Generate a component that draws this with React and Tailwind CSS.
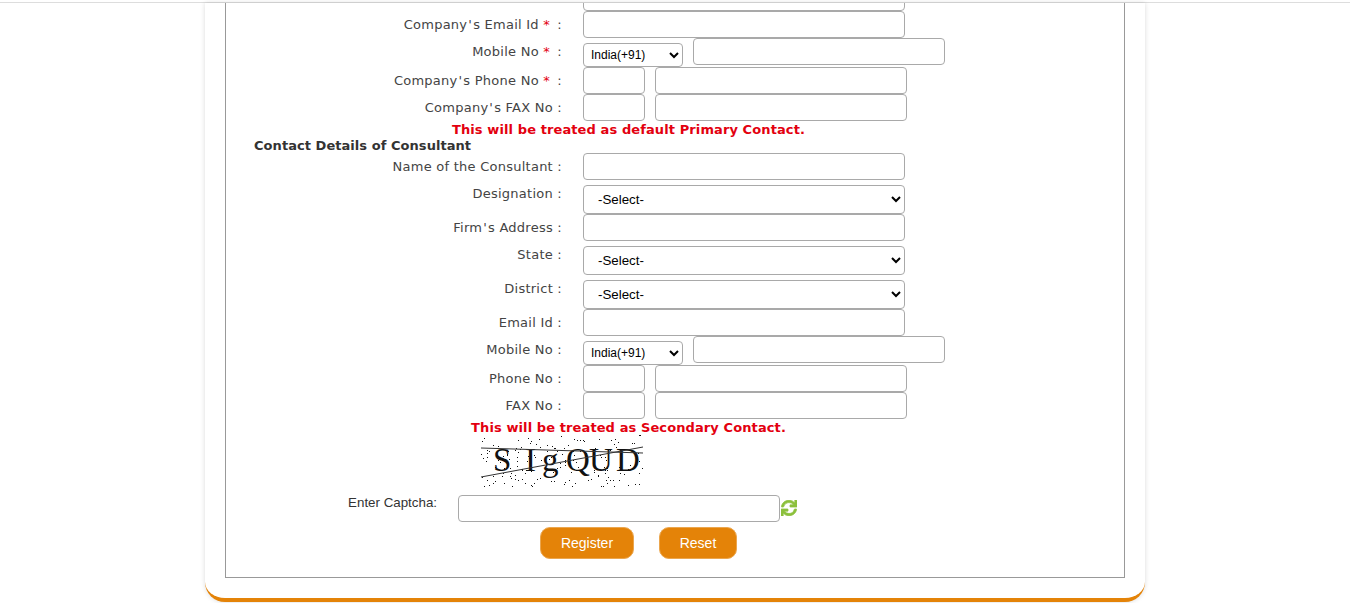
import { FaSync } from 'react-icons/fa';

const labelFont = { fontFamily: '"DejaVu Sans", Verdana, sans-serif' };
const arial = { fontFamily: '"Liberation Sans", Arial, sans-serif' };

// captcha speckle, fixed seed so the picture stays the same
const dots = [];
let seed = 17;
for (let i = 0; i < 170; i++) {
  seed = (seed * 16807) % 2147483647;
  const x = seed % 162;
  seed = (seed * 16807) % 2147483647;
  const y = seed % 52;
  dots.push([x, y]);
}

function Row({ label, required, children }) {
  // the apostrophe sets wider in the original font
  const [head, tail] = label.split("'");
  return (
    <div className="flex">
      <div className="w-[336px] shrink-0 text-right text-[13px] leading-[27px] tracking-[0.25px] text-[#444]">
        {head}
        {tail !== undefined && <span className="px-px">'</span>}
        {tail}
        {required && <span className="mr-[3px] text-[#e3000f]"> *</span>} :
      </div>
      <div className="ml-[21px] flex">{children}</div>
    </div>
  );
}

function Input({ className }) {
  return (
    <input
      type="text"
      className={`box-border h-[27px] rounded-[4px] border border-[#a9a9a9] bg-white ${className}`}
    />
  );
}

function Select({ children, className }) {
  return (
    <select className={`box-border rounded-[4px] border border-[#a9a9a9] bg-white text-black ${className}`} style={arial}>
      {children}
    </select>
  );
}

function WideSelect() {
  return (
    <Select className="mt-[5px] h-[29px] w-[322px] pl-[10px] text-[13.33px]">
      <option>-Select-</option>
    </Select>
  );
}

function MobileControls() {
  return (
    <>
      <Select className="mt-[5px] h-[24px] w-[100px] pl-[3px] text-[12px]">
        <option>India(+91)</option>
      </Select>
      <Input className="ml-[10px] w-[252px]" />
    </>
  );
}

function SplitControls() {
  return (
    <>
      <Input className="w-[62px]" />
      <Input className="ml-[10px] w-[252px]" />
    </>
  );
}

function Notice({ children }) {
  return (
    <div className="h-[16px] w-[805px] text-center text-[13px] font-bold leading-[18px] tracking-[0.1px] text-[#e3000f]">
      {children}
    </div>
  );
}

function Captcha() {
  return (
    <svg width="162" height="52" viewBox="0 0 162 52" className="ml-[255px] block">
      {dots.map(([x, y], i) => (
        <rect key={i} x={x} y={y} width="1" height="1" fill="#111" />
      ))}
      <text x="12 44 61 85 108 135" y="36" fontFamily="'Liberation Serif', serif" fontSize="33" fill="#111">
        SIgQUD
      </text>
      <line x1="0" y1="13" x2="162" y2="18" stroke="#333" strokeWidth="1" />
      <line x1="0" y1="42" x2="162" y2="12" stroke="#333" strokeWidth="1" />
    </svg>
  );
}

export default function App() {
  return (
    <div className="h-[603px] overflow-hidden bg-white" style={labelFont}>
      <div className="h-[3px] border-b border-[#dddddd]" />
      <div className="mx-auto box-border h-[599px] w-[940px] rounded-b-[20px] border-b-[4px] border-[#e48308] bg-white px-5 shadow-[0_0_5px_rgba(0,0,0,0.15)]">
        <div className="box-border h-[575px] border-x border-b border-[#999999]">
          {/* row cut off by the scroll position */}
          <div className="flex h-[8px] items-end overflow-hidden pl-[357px]">
            <Input className="w-[322px] shrink-0" />
          </div>

          <Row label="Company's Email Id" required>
            <Input className="w-[322px]" />
          </Row>
          <Row label="Mobile No" required>
            <MobileControls />
          </Row>
          <Row label="Company's Phone No" required>
            <SplitControls />
          </Row>
          <Row label="Company's FAX No">
            <SplitControls />
          </Row>

          <Notice>This will be treated as default Primary Contact.</Notice>
          <h3 className="h-[16px] pl-[28px] text-[13px] font-bold leading-[18px] tracking-[0.05px] text-[#333]">
            Contact Details of Consultant
          </h3>

          <Row label="Name of the Consultant">
            <Input className="w-[322px]" />
          </Row>
          <Row label="Designation">
            <WideSelect />
          </Row>
          <Row label="Firm's Address">
            <Input className="w-[322px]" />
          </Row>
          <Row label="State">
            <WideSelect />
          </Row>
          <Row label="District">
            <WideSelect />
          </Row>
          <Row label="Email Id">
            <Input className="w-[322px]" />
          </Row>
          <Row label="Mobile No">
            <MobileControls />
          </Row>
          <Row label="Phone No">
            <SplitControls />
          </Row>
          <Row label="FAX No">
            <SplitControls />
          </Row>

          <Notice>This will be treated as Secondary Contact.</Notice>
          <Captcha />

          <div className="mt-[8px] flex" style={arial}>
            <div className="w-[211px] shrink-0 text-right text-[13.33px] leading-[15px] text-[#333]">Enter Captcha:</div>
            <Input className="ml-[21px] w-[322px]" />
            <FaSync className="ml-[1px] mt-[5px] h-[16px] w-[16px] text-[#8cc03c]" stroke="currentColor" strokeWidth="25" />
          </div>

          <div className="mt-[5px] flex pl-[314px]" style={arial}>
            <button className="h-[32px] w-[94px] rounded-[10px] border border-[#eba64e] bg-[#e48308] text-[14px] text-white">Register</button>
            <button className="ml-[25px] h-[32px] w-[78px] rounded-[10px] border border-[#eba64e] bg-[#e48308] text-[14px] text-white">Reset</button>
          </div>
        </div>
      </div>
    </div>
  );
}
